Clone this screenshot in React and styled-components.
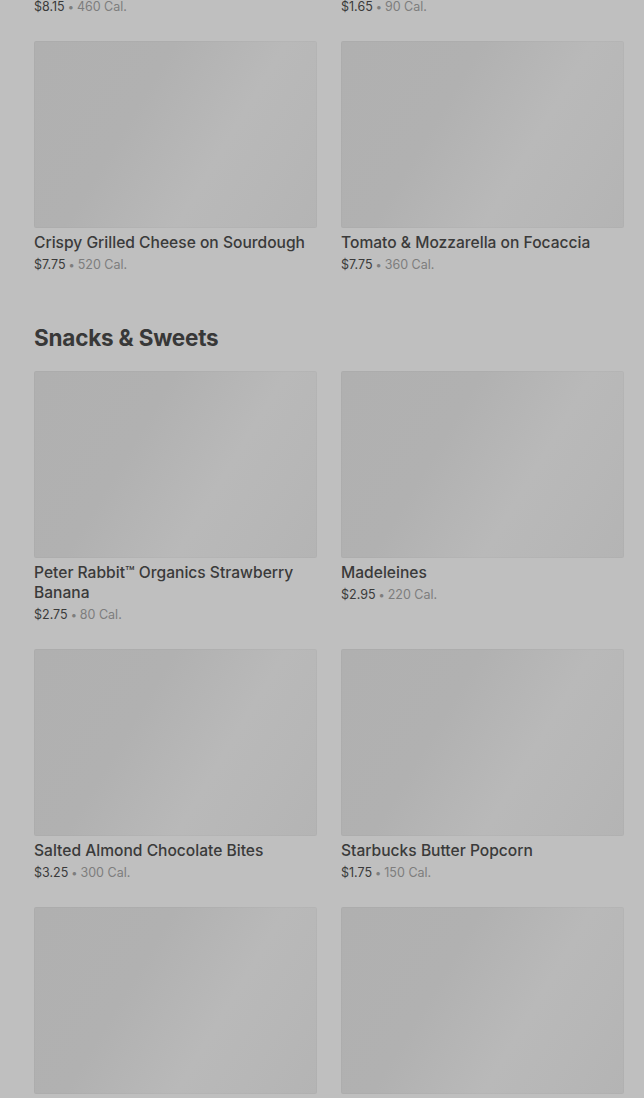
import React from 'react';
import styled, { createGlobalStyle } from 'styled-components';

const GlobalStyle = createGlobalStyle`
    html, body {
        margin: 0;
        padding: 0;
        background: #bfbfbf;
        overflow: hidden;
    }
    body {
        font-family: Inter, "Noto Sans", "Liberation Sans", sans-serif;
        -webkit-font-smoothing: antialiased;
    }
`

const Page = styled.main`
    display: flex;
    flex-direction: column;
    padding: 0 20px 0 34px;
    margin-top: -217px;
`

const Section = styled.section`
    display: flex;
    flex-direction: column;
    margin-top: ${props => props.first ? '0' : '49px'};
`

const SectionTitle = styled.h2`
    margin: 0 0 19px;
    font-size: 22.5px;
    line-height: 28px;
    font-weight: 700;
    letter-spacing: -0.2px;
    color: #383838;
`

const Grid = styled.div`
    display: grid;
    grid-template-columns: 283px 283px;
    column-gap: 24px;
    row-gap: 24px;
`

const Card = styled.article`
    display: flex;
    flex-direction: column;
`

const ImageBox = styled.div`
    height: 187px;
    border-radius: 2px;
    box-shadow: inset 0 0 0 1px rgba(0, 0, 0, 0.02);
    background: linear-gradient(
        121deg,
        #b0b0b0 0%,
        #b1b1b1 36%,
        #b5b5b5 50%,
        #b9b9b9 64%,
        #b7b7b7 80%,
        #b4b4b4 100%
    );
`

const Name = styled.h3`
    margin: 5px 0 0;
    font-size: 15.6px;
    line-height: 20px;
    font-weight: 500;
    color: #3a3a3a;
`

const Meta = styled.p`
    margin: 2px 0 0;
    font-size: 12.5px;
    line-height: 20px;
    color: #7d7d7d;
`

const Price = styled.span`
    color: #3a3a3a;
`

const Dot = styled.span`
    margin: 0 3px;
    font-size: 11px;
`

const sections = [
    {
        title: null,
        items: [
            { name: 'Turkey & Pesto Panini', price: '$8.15', cal: 460 },
            { name: 'Butter Croissant', price: '$1.65', cal: 90 },
            { name: 'Crispy Grilled Cheese on Sourdough', price: '$7.75', cal: 520 },
            { name: 'Tomato & Mozzarella on Focaccia', price: '$7.75', cal: 360 },
        ],
    },
    {
        title: 'Snacks & Sweets',
        items: [
            { name: 'Peter Rabbit™ Organics Strawberry Banana', price: '$2.75', cal: 80 },
            { name: 'Madeleines', price: '$2.95', cal: 220 },
            { name: 'Salted Almond Chocolate Bites', price: '$3.25', cal: 300 },
            { name: 'Starbucks Butter Popcorn', price: '$1.75', cal: 150 },
            { name: 'Hippeas® Vegan White Cheddar', price: '$2.45', cal: 130 },
            { name: 'Kind® Salted Caramel Bar', price: '$2.75', cal: 200 },
        ],
    },
];

const MenuItem = ({ name, price, cal }) => (
    <Card>
        <ImageBox />
        <Name>{ name }</Name>
        <Meta>
            <Price>{ price }</Price>
            <Dot>•</Dot>
            { cal } Cal.
        </Meta>
    </Card>
);

const App = () => (
    <>
        <GlobalStyle />
        <Page>
            { sections.map((section, i) => (
                <Section key={ i } first={ i === 0 }>
                    { section.title && <SectionTitle>{ section.title }</SectionTitle> }
                    <Grid>
                        { section.items.map(item => <MenuItem key={ item.name } { ...item } />) }
                    </Grid>
                </Section>
            )) }
        </Page>
    </>
);

export default App;
